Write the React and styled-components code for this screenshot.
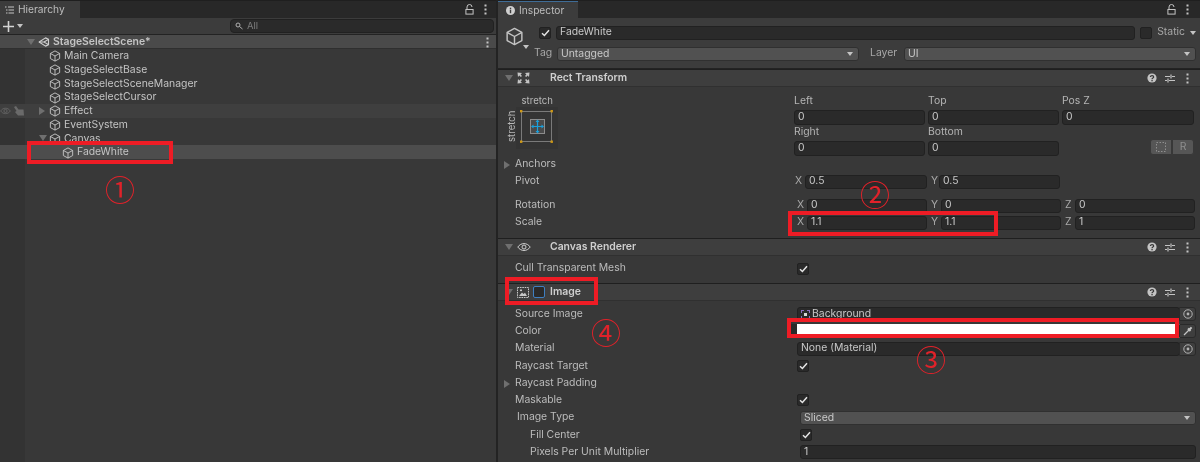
import React from "react";
import styled, { createGlobalStyle } from "styled-components";

const Global = createGlobalStyle`
  html, body { margin: 0; padding: 0; background: #282828; }
  * { box-sizing: border-box; }
`

const Page = styled.div`
  position: relative;
  width: 1200px;
  height: 462px;
  overflow: hidden;
  display: flex;
  gap: 2px;
  background: #232323;
  color: #c4c4c4;
  font-family: Inter, "Liberation Sans", sans-serif;
  font-size: 10.4px;
  line-height: 1;
  filter: blur(0.3px);
`

const Panel = styled.div`
  display: flex;
  flex-direction: column;
  flex: none;
  width: ${(p) => p.$w}px;
  height: 462px;
  background: #383838;
  overflow: hidden;
`

const TabStrip = styled.div`
  flex: none;
  height: 18px;
  display: flex;
  align-items: stretch;
  justify-content: space-between;
  background: #282828;
  border-top: 1px solid #1f1f1f;
`

const Tab = styled.div`
  width: 80px;
  display: flex;
  align-items: center;
  gap: 4px;
  padding-left: ${(p) => p.$pl}px;
  font-size: 10.2px;
  background: #3c3c3c;
  color: #bdbdbd;
  border-top: ${(p) => (p.$active ? "1px solid #3f6c96" : "none")};
`

const TabTools = styled.div`
  display: flex;
  align-items: center;
  gap: 10px;
  padding-right: ${(p) => p.$pr}px;
`

const Toolbar = styled.div`
  flex: none;
  height: 17px;
  display: flex;
  align-items: center;
  justify-content: space-between;
  padding: 0 2px 0 3px;
  background: #3c3c3c;
  border-bottom: 1px solid #232323;
`

const AddButton = styled.div`
  display: flex;
  align-items: center;
  gap: 3px;
`

const Search = styled.div`
  width: 264px;
  height: 14px;
  display: flex;
  align-items: center;
  gap: 4px;
  padding-left: 4px;
  font-size: 9.5px;
  color: #7c7c7c;
  background: #2a2a2a;
  border: 1px solid #212121;
  border-radius: 4px;
`

const Tree = styled.div`
  flex: 1;
  display: flex;
  flex-direction: column;
  background: linear-gradient(to right, #333333 25px, #383838 25px);
`

const SceneRow = styled.div`
  height: 14px;
  display: flex;
  align-items: center;
  justify-content: space-between;
  padding: 1px 7px 0 27px;
  background: #4a4a4a;
  font-weight: 600;
  border-bottom: 1px solid #2f2f2f;
`

const SceneName = styled.div`
  display: flex;
  align-items: center;
  gap: 3px;
`

const TreeRow = styled.div`
  position: relative;
  height: 13.75px;
  display: flex;
  align-items: center;
  gap: 3px;
  padding-top: 1px;
  padding-left: ${(p) => p.$indent}px;
  background: ${(p) => (p.$selected ? "#4d4d4d" : p.$hover ? "#3f3f3f" : "transparent")};
`

const GutterIcons = styled.div`
  position: absolute;
  left: 0;
  top: 2px;
  display: flex;
  gap: 3px;
  align-items: center;
`

const Arrow = styled.span`
  width: 0;
  height: 0;
  flex: none;
  border-style: solid;
  border-color: transparent;
  ${(p) =>
    p.$open
      ? "border-width: 6px 4px 0 4px; border-top-color: #6f6f6f;"
      : "border-width: 4px 0 4px 6px; border-left-color: #6f6f6f;"}
`

const ArrowSlot = styled.span`
  position: absolute;
  left: ${(p) => p.$x}px;
  top: 3px;
  display: flex;
`

const ObjectHeader = styled.div`
  flex: none;
  height: 51px;
  display: flex;
  gap: 10px;
  padding: 7px 4px 0 6px;
  background: #3c3c3c;
  border-bottom: 1px solid #232323;
`

const ObjectIcon = styled.div`
  position: relative;
  flex: none;
  width: 19px;
  height: 19px;
  margin: 2px 0 0 1px;
`

const IconCaret = styled.span`
  position: absolute;
  right: -5px;
  bottom: -3px;
  width: 0;
  height: 0;
  border-style: solid;
  border-color: transparent;
  border-width: 4px 3px 0 3px;
  border-top-color: #c4c4c4;
`

const HeaderRows = styled.div`
  flex: 1;
  display: flex;
  flex-direction: column;
  gap: 6px;
`

const HeaderLine = styled.div`
  height: 15px;
  display: flex;
  align-items: center;
  gap: 5px;
`

const Check = styled.span`
  flex: none;
  width: 12px;
  height: 12px;
  display: flex;
  align-items: center;
  justify-content: center;
  background: #2a2a2a;
  border: 1px solid #212121;
  border-radius: 2px;
  margin-left: ${(p) => p.$ml || 0}px;
`

const Field = styled.div`
  flex: ${(p) => (p.$w ? "none" : 1)};
  width: ${(p) => (p.$w ? `${p.$w}px` : "auto")};
  height: 14px;
  display: flex;
  align-items: center;
  padding-left: 3px;
  color: #c8c8c8;
  background: #2a2a2a;
  border: 1px solid #212121;
  border-radius: 3px;
  overflow: hidden;
  white-space: nowrap;
`

const Dropdown = styled.div`
  flex: ${(p) => (p.$w ? "none" : 1)};
  width: ${(p) => (p.$w ? `${p.$w}px` : "auto")};
  height: 14px;
  display: flex;
  align-items: center;
  justify-content: space-between;
  padding: 1px 5px 0 3px;
  color: #c8c8c8;
  background: #515151;
  border: 1px solid #303030;
  border-radius: 3px;
`

const Caret = styled.span`
  width: 0;
  height: 0;
  border-style: solid;
  border-color: transparent;
  border-width: 4px 3px 0 3px;
  border-top-color: #c4c4c4;
`

const Muted = styled.span`
  color: #a8a8a8;
  flex: none;
  width: ${(p) => (p.$w ? `${p.$w}px` : "auto")};
  margin-left: ${(p) => p.$ml || 0}px;
`

const SectionTitle = styled.div`
  flex: none;
  height: 18px;
  display: flex;
  align-items: center;
  padding: 0 11px 0 7px;
  background: #3e3e3e;
  border-top: 1px solid #1f1f1f;
  border-bottom: 1px solid #303030;
`

const TitleIcon = styled.span`
  width: 33px;
  flex: none;
  display: flex;
  align-items: center;
  gap: 4px;
  margin-left: 4px;
`

const TitleText = styled.span`
  flex: 1;
  font-weight: 600;
  color: #cfcfcf;
`

const TitleTools = styled.div`
  display: flex;
  align-items: center;
  gap: 8px;
`

const ToolEnd = styled.span`
  display: flex;
  margin-left: 3px;
`

const RectTop = styled.div`
  flex: none;
  height: 69px;
  display: flex;
`

const AnchorSlot = styled.div`
  flex: none;
  width: 296px;
  padding: 7px 0 0 8px;
`

const TransformGrid = styled.div`
  flex: 1;
  display: grid;
  grid-template-columns: 131px 131px 132px;
  grid-auto-rows: 31px;
  column-gap: 3px;
  padding-top: 7px;
  margin-right: 4px;
`

const Stacked = styled.div`
  display: flex;
  flex-direction: column;
  gap: 2px;
  color: #b4b4b4;
`

const StackLabel = styled.div`
  height: 14px;
  display: flex;
  align-items: center;
`

const ToolPair = styled.div`
  display: flex;
  justify-content: flex-end;
  align-items: flex-end;
  height: 30px;
`

const ToolBtn = styled.div`
  width: 22px;
  height: 16px;
  display: flex;
  align-items: center;
  justify-content: center;
  color: #8f8f8f;
  background: #565656;
  border: 1px solid #383838;
  border-radius: ${(p) => p.$r};
`

const Row = styled.div`
  flex: none;
  height: ${(p) => p.$h || 17.25}px;
  display: flex;
  align-items: center;
  padding-left: ${(p) => p.$indent || 17}px;
  padding-right: 4px;
  position: relative;
`

// value column starts at $col, measured from the panel edge
const RowLabel = styled.span`
  flex: none;
  width: ${(p) => (p.$col || 297) - (p.$indent || 17)}px;
  color: #bcbcbc;
`

const ExpandArrow = styled.span`
  position: absolute;
  left: 6px;
  top: 5px;
  display: flex;
`

const AxisRow = styled.div`
  flex: 1;
  display: flex;
  align-items: center;
  padding-left: ${(p) => p.$pl || 0}px;
`

const Axis = styled.span`
  flex: none;
  width: ${(p) => p.$w || 10}px;
  padding-left: ${(p) => (p.$w ? 4 : 0)}px;
  color: #a8a8a8;
`

const Spacer = styled.div`
  flex: none;
  height: ${(p) => p.$h}px;
`

const ObjectPicker = styled.div`
  flex: none;
  width: 17px;
  height: 14px;
  margin-left: -1px;
  display: flex;
  align-items: center;
  justify-content: center;
  background: #3e3e3e;
  border: 1px solid #2a2a2a;
  border-radius: 0 3px 3px 0;
`

const ColorWell = styled.div`
  flex: 1;
  height: 14px;
  display: flex;
  align-items: center;
  background: #2a2a2a;
`

const Swatch = styled.div`
  flex: 1;
  height: 100%;
  background: #ffffff;
  margin-left: 6px;
`

const SpriteMark = styled.span`
  width: 9px;
  height: 9px;
  margin-right: 2px;
  display: flex;
  align-items: center;
  justify-content: center;
  border: 1px dashed #8a6fc0;
`

const SpriteDot = styled.span`
  width: 3px;
  height: 3px;
  background: #d8d8d8;
`

const EnableBox = styled.span`
  flex: none;
  width: 12px;
  height: 12px;
  background: #2a2a2a;
  border: 1px solid #3f7fc0;
  border-radius: 2px;
`

const Note = styled.div`
  position: absolute;
  left: ${(p) => p.$x}px;
  top: ${(p) => p.$y}px;
  width: ${(p) => p.$w}px;
  height: ${(p) => p.$h}px;
  border: 4px solid #ee1c25;
  pointer-events: none;
`

const Mark = styled.div`
  position: absolute;
  left: ${(p) => p.$x}px;
  top: ${(p) => p.$y}px;
  width: 30px;
  height: 30px;
  display: flex;
  align-items: center;
  justify-content: center;
  color: #e0222a;
  font-family: "Noto Sans CJK JP", sans-serif;
  font-size: 30px;
  line-height: 30px;
`

const Cube = ({ size = 12, color = "#c8c8c8" }) => (
  <svg width={size} height={size} viewBox="0 0 16 16" fill="none" stroke={color} strokeWidth="1.2" strokeLinejoin="round" style={{ flex: "none", display: "block" }}>
    <path d="M8 1.2 14.2 4.6v6.8L8 14.8 1.8 11.4V4.6z" />
    <path d="M1.8 4.6 8 8l6.2-3.4M8 8v6.8" />
  </svg>
)

const Unity = () => (
  <svg width="12" height="12" viewBox="0 0 16 16" fill="none" stroke="#cfcfcf" strokeWidth="1.5" strokeLinejoin="round">
    <path d="M1.5 8 10 2.5 14 4.5 14 11.5 10 13.5z" />
    <path d="M1.5 8H8L14 4.5M8 8l6 3.5" />
  </svg>
)

const Kebab = ({ color = "#c4c4c4" }) => (
  <svg width="3" height="11" viewBox="0 0 3 11" fill={color}>
    <rect x="0.5" y="0.5" width="2" height="2" />
    <rect x="0.5" y="4.5" width="2" height="2" />
    <rect x="0.5" y="8.5" width="2" height="2" />
  </svg>
)

const Lock = () => (
  <svg width="9" height="11" viewBox="0 0 9 11" fill="none" stroke="#c4c4c4" strokeWidth="1">
    <path d="M2 5V3a2.5 2.5 0 0 1 5 0" />
    <rect x="0.9" y="5.5" width="7.2" height="4.6" />
  </svg>
)

const Help = () => (
  <svg width="10" height="10" viewBox="0 0 10 10">
    <circle cx="5" cy="5" r="4.6" fill="#c4c4c4" />
    <path d="M3.4 4C3.4 2 6.7 2.2 6.7 3.9 6.7 5 5 5 5 6.2" fill="none" stroke="#383838" strokeWidth="1.2" />
    <rect x="4.4" y="7" width="1.3" height="1.3" fill="#383838" />
  </svg>
)

const Sliders = () => (
  <svg width="10" height="9" viewBox="0 0 10 9" stroke="#c4c4c4" strokeWidth="1.2" fill="none">
    <path d="M0 2.5h5M7 2.5h3M6 0.5v4M0 6.5h2M4 6.5h6M3 4.5v4" />
  </svg>
)

const Tools = () => (
  <TitleTools>
    <Help />
    <Sliders />
    <ToolEnd>
      <Kebab />
    </ToolEnd>
  </TitleTools>
)

const Target = () => (
  <svg width="10" height="10" viewBox="0 0 10 10" fill="none" stroke="#b4b4b4">
    <circle cx="5" cy="5" r="4.2" />
    <circle cx="5" cy="5" r="1.4" fill="#b4b4b4" stroke="none" />
  </svg>
)

const Tick = () => (
  <svg width="9" height="8" viewBox="0 0 9 8" fill="none" stroke="#e4e4e4" strokeWidth="1.5">
    <path d="M1 4.2 3.4 6.5 8 1.2" />
  </svg>
)

const Dropper = () => (
  <svg width="10" height="10" viewBox="0 0 10 10" stroke="#c4c4c4" fill="none">
    <path d="M1 9 6 4" strokeWidth="1.3" />
    <path d="M5 2.5 7.5 5M6.5 3.5 8.6 1.4" strokeWidth="2" />
  </svg>
)

const TransformIcon = () => (
  <svg width="13" height="12" viewBox="0 0 13 12" fill="#c4c4c4">
    <path d="M0.5 0.5 5 1 3.6 2.4 5 4 3.8 5 2.4 3.6 1 5zM12.5 0.5 12 5 10.6 3.6 9.2 5 8 4 9.4 2.4 8 1zM0.5 11.5 1 7 2.4 8.4 3.8 7 5 8 3.6 9.6 5 11zM12.5 11.5 8 11 9.4 9.6 8 8 9.2 7 10.6 8.4 12 7z" />
  </svg>
)

const Eye = ({ size = 14, color = "#d0d0d0" }) => (
  <svg width={size} height={size * 0.72} viewBox="0 0 14 10" fill="none" stroke={color}>
    <path d="M0.8 5C4 0.4 10 0.4 13.2 5 10 9.6 4 9.6 0.8 5Z" />
    <circle cx="7" cy="5" r="2" />
  </svg>
)

const Hand = () => (
  <svg width="10" height="10" viewBox="0 0 10 10" fill="#6a6a6a">
    <path d="M0 1 2 0 4.5 3.5 9.5 3.5 10 9.5 4 9.5 1 6 2.5 5z" />
  </svg>
)

const ImageIcon = () => (
  <svg width="12" height="11" viewBox="0 0 12 11" fill="none" stroke="#c8c8c8" style={{ flex: "none" }}>
    <rect x="0.5" y="0.5" width="11" height="10" strokeDasharray="1.6 0.8" />
    <path d="M2 9 5 5.5 6.5 7 8 5.8 10 9z" fill="#c8c8c8" stroke="none" />
    <rect x="3" y="2.5" width="2" height="1.6" fill="#c8c8c8" stroke="none" />
  </svg>
)

const AnchorGlyph = () => (
  <svg width="80" height="62" viewBox="0 0 80 62" style={{ display: "block" }}>
    <rect x="10" y="13" width="42" height="42" fill="#343434" />
    <text x="15.5" y="10" fontSize="9.6" fill="#b8b8b8" fontFamily="Inter, sans-serif">stretch</text>
    <text transform="translate(8.5 48) rotate(-90)" fontSize="9.6" fill="#b8b8b8" fontFamily="Inter, sans-serif">stretch</text>
    <rect x="15.5" y="17.5" width="30" height="30" fill="none" stroke="#7a7a7a" />
    <rect x="24.5" y="25.5" width="14" height="14" fill="#4a4a4a" stroke="#8c8c8c" />
    <path d="M31.5 27v11M26 32.5h11" stroke="#19a0dc" strokeWidth="1.2" />
    <path d="M31.5 25.5l-2 2.5h4zM31.5 39.5l-2-2.5h4zM25 32.5l2.5-2v4zM38 32.5l-2.5-2v4z" fill="#19a0dc" />
    <g fill="#d09a16">
      <rect x="14" y="16" width="2.4" height="2.4" />
      <rect x="44.5" y="16" width="2.4" height="2.4" />
      <rect x="14" y="46.5" width="2.4" height="2.4" />
      <rect x="44.5" y="46.5" width="2.4" height="2.4" />
    </g>
  </svg>
)

const TREE = [
  { name: "Main Camera", indent: 49 },
  { name: "StageSelectBase", indent: 49 },
  { name: "StageSelectSceneManager", indent: 49 },
  { name: "StageSelectCursor", indent: 49 },
  { name: "Effect", indent: 49, hover: true, arrow: 39 },
  { name: "EventSystem", indent: 49 },
  { name: "Canvas", indent: 49, arrow: 39, open: true },
  { name: "FadeWhite", indent: 62, selected: true },
]

const Hierarchy = () => (
  <Panel $w={496}>
    <TabStrip>
      <Tab $pl={5}>
        <svg width="9" height="8" viewBox="0 0 9 8" stroke="#c4c4c4" fill="none">
          <path d="M0 1h1.5M3 1h6M1 4h1.5M3.5 4H9M1 7h1.5M3.5 7H9" />
        </svg>
        Hierarchy
      </Tab>
      <TabTools $pr={9}>
        <Lock />
        <Kebab />
      </TabTools>
    </TabStrip>
    <Toolbar>
      <AddButton>
        <svg width="11" height="11" viewBox="0 0 11 11" stroke="#d4d4d4" strokeWidth="1.6">
          <path d="M5.5 0v11M0 5.5h11" />
        </svg>
        <Caret />
      </AddButton>
      <Search>
        <svg width="8" height="8" viewBox="0 0 8 8" fill="none" stroke="#b0b0b0">
          <circle cx="3" cy="3" r="2" />
          <path d="M4.5 4.5 7.5 7" />
        </svg>
        All
      </Search>
    </Toolbar>
    <Tree>
      <SceneRow>
        <SceneName>
          <Arrow $open />
          <Unity />
          StageSelectScene*
        </SceneName>
        <Kebab />
      </SceneRow>
      {TREE.map((t) => (
        <TreeRow key={t.name} $indent={t.indent} $hover={t.hover} $selected={t.selected}>
          {t.hover && (
            <GutterIcons>
              <Eye color="#6a6a6a" size={11} />
              <Hand />
            </GutterIcons>
          )}
          {t.arrow && (
            <ArrowSlot $x={t.arrow}>
              <Arrow $open={t.open} />
            </ArrowSlot>
          )}
          <Cube />
          {t.name}
        </TreeRow>
      ))}
    </Tree>
  </Panel>
)

const Inspector = () => (
  <Panel $w={702}>
    <TabStrip>
      <Tab $active $pl={8}>
        <svg width="9" height="9" viewBox="0 0 9 9">
          <circle cx="4.5" cy="4.5" r="4.5" fill="#d0d0d0" />
          <rect x="3.8" y="3.6" width="1.4" height="3.6" fill="#3c3c3c" />
          <rect x="3.8" y="1.7" width="1.4" height="1.3" fill="#3c3c3c" />
        </svg>
        Inspector
      </Tab>
      <TabTools $pr={11}>
        <Lock />
        <Kebab />
      </TabTools>
    </TabStrip>
    <ObjectHeader>
      <ObjectIcon>
        <Cube size={19} color="#c4c4c4" />
        <IconCaret />
      </ObjectIcon>
      <HeaderRows>
        <HeaderLine>
          <Check $ml={5}>
            <Tick />
          </Check>
          <Field>FadeWhite</Field>
          <Check />
          <Muted>Static</Muted>
          <Caret />
        </HeaderLine>
        <HeaderLine>
          <Muted $w={18}>Tag</Muted>
          <Dropdown $w={302}>
            Untagged
            <Caret />
          </Dropdown>
          <Muted $w={29} $ml={6}>Layer</Muted>
          <Dropdown>
            UI
            <Caret />
          </Dropdown>
        </HeaderLine>
      </HeaderRows>
    </ObjectHeader>

    <SectionTitle>
      <Arrow $open />
      <TitleIcon>
        <TransformIcon />
      </TitleIcon>
      <TitleText>Rect Transform</TitleText>
      <Tools />
    </SectionTitle>
    <RectTop>
      <AnchorSlot>
        <AnchorGlyph />
      </AnchorSlot>
      <TransformGrid>
        <Stacked>
          <StackLabel>Left</StackLabel>
          <Field>0</Field>
        </Stacked>
        <Stacked>
          <StackLabel>Top</StackLabel>
          <Field>0</Field>
        </Stacked>
        <Stacked>
          <StackLabel>Pos Z</StackLabel>
          <Field>0</Field>
        </Stacked>
        <Stacked>
          <StackLabel>Right</StackLabel>
          <Field>0</Field>
        </Stacked>
        <Stacked>
          <StackLabel>Bottom</StackLabel>
          <Field>0</Field>
        </Stacked>
        <ToolPair>
          <ToolBtn $r="3px 0 0 3px">
            <svg width="10" height="10" viewBox="0 0 10 10" fill="none" stroke="#8f8f8f">
              <rect x="0.5" y="0.5" width="9" height="9" strokeDasharray="1.5 1.5" />
            </svg>
          </ToolBtn>
          <ToolBtn $r="0 3px 3px 0">R</ToolBtn>
        </ToolPair>
      </TransformGrid>
    </RectTop>
    <Row $h={17}>
      <ExpandArrow>
        <Arrow />
      </ExpandArrow>
      <RowLabel>Anchors</RowLabel>
    </Row>
    <Row $h={17}>
      <RowLabel>Pivot</RowLabel>
      <AxisRow>
        <Axis>X</Axis>
        <Field $w={122}>0.5</Field>
        <Axis $w={12}>Y</Axis>
        <Field $w={121}>0.5</Field>
      </AxisRow>
    </Row>
    <Spacer $h={7} />
    <Row $h={17}>
      <RowLabel>Rotation</RowLabel>
      <AxisRow $pl={2}>
        <Axis>X</Axis>
        <Field $w={120}>0</Field>
        <Axis $w={14}>Y</Axis>
        <Field $w={120}>0</Field>
        <Axis $w={14}>Z</Axis>
        <Field $w={120}>0</Field>
      </AxisRow>
    </Row>
    <Row $h={17}>
      <RowLabel>Scale</RowLabel>
      <AxisRow $pl={2}>
        <Axis>X</Axis>
        <Field $w={120}>1.1</Field>
        <Axis $w={14}>Y</Axis>
        <Field $w={120}>1.1</Field>
        <Axis $w={14}>Z</Axis>
        <Field $w={120}>1</Field>
      </AxisRow>
    </Row>
    <Spacer $h={7} />

    <SectionTitle>
      <Arrow $open />
      <TitleIcon>
        <Eye />
      </TitleIcon>
      <TitleText>Canvas Renderer</TitleText>
      <Tools />
    </SectionTitle>
    <Spacer $h={4} />
    <Row $h={17}>
      <RowLabel $col={299}>Cull Transparent Mesh</RowLabel>
      <Check>
        <Tick />
      </Check>
    </Row>
    <Spacer $h={6} />

    <SectionTitle>
      <Arrow $open />
      <TitleIcon>
        <ImageIcon />
        <EnableBox />
      </TitleIcon>
      <TitleText>Image</TitleText>
      <Tools />
    </SectionTitle>
    <Spacer $h={4.5} />
    <Row>
      <RowLabel $col={299}>Source Image</RowLabel>
      <Field>
        <SpriteMark>
          <SpriteDot />
        </SpriteMark>
        Background
      </Field>
      <ObjectPicker>
        <Target />
      </ObjectPicker>
    </Row>
    <Row>
      <RowLabel $col={293}>Color</RowLabel>
      <ColorWell>
        <Swatch />
      </ColorWell>
      <ObjectPicker>
        <Dropper />
      </ObjectPicker>
    </Row>
    <Row>
      <RowLabel $col={299}>Material</RowLabel>
      <Field>None (Material)</Field>
      <ObjectPicker>
        <Target />
      </ObjectPicker>
    </Row>
    <Row>
      <RowLabel $col={299}>Raycast Target</RowLabel>
      <Check>
        <Tick />
      </Check>
    </Row>
    <Row>
      <ExpandArrow>
        <Arrow />
      </ExpandArrow>
      <RowLabel $col={299}>Raycast Padding</RowLabel>
    </Row>
    <Row>
      <RowLabel $col={299}>Maskable</RowLabel>
      <Check>
        <Tick />
      </Check>
    </Row>
    <Row $indent={19}>
      <RowLabel $col={302} $indent={19}>Image Type</RowLabel>
      <Dropdown>
        Sliced
        <Caret />
      </Dropdown>
    </Row>
    <Row $indent={32}>
      <RowLabel $col={302} $indent={32}>Fill Center</RowLabel>
      <Check>
        <Tick />
      </Check>
    </Row>
    <Row $indent={32}>
      <RowLabel $col={302} $indent={32}>Pixels Per Unit Multiplier</RowLabel>
      <Field>1</Field>
    </Row>
  </Panel>
)

export default function App() {
  return (
    <>
      <Global />
      <Page>
        <Hierarchy />
        <Inspector />
        <Note $x={27} $y={141} $w={146} $h={23} />
        <Note $x={788} $y={211} $w={210} $h={25} />
        <Note $x={787} $y={318} $w={392} $h={20} />
        <Note $x={505} $y={277} $w={93} $h={28} />
        <Mark $x={105} $y={173}>①</Mark>
        <Mark $x={860} $y={178}>②</Mark>
        <Mark $x={916} $y={343}>③</Mark>
        <Mark $x={591} $y={316}>④</Mark>
      </Page>
    </>
  );
}
